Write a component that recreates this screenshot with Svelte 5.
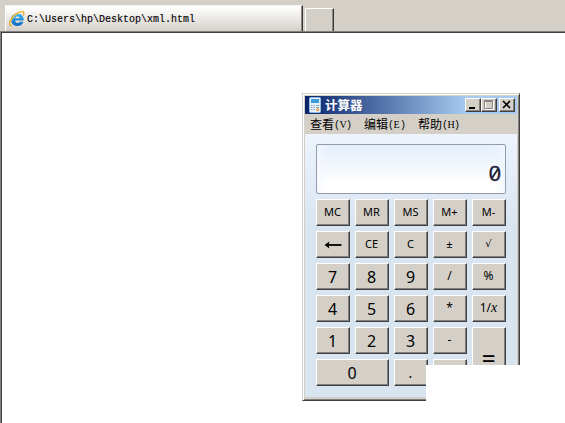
<script>
  const keys = [
    ['MC'], ['MR'], ['MS'], ['M+'], ['M-'],
    ['←', 'back'], ['CE'], ['C'], ['±'], ['√', 'root'],
    ['7', 'digit'], ['8', 'digit'], ['9', 'digit'], ['/', 'op'], ['%', 'op'],
    ['4', 'digit'], ['5', 'digit'], ['6', 'digit'], ['*', 'op'], ['1/x', 'inverse'],
    ['1', 'digit'], ['2', 'digit'], ['3', 'digit'], ['-', 'op minus'], ['=', 'equals'],
    ['0', 'digit zero'], ['.', 'digit dot'], ['+', 'op']
  ];
  const menus = [['查看', 'V'], ['编辑', 'E'], ['帮助', 'H']];
</script>

<main class="browser">
  <header class="tabs">
    <div class="tab">
      <svg class="ie" width="16" height="16" viewBox="0 0 16 16">
        <defs>
          <linearGradient id="blue" x1="0" y1="0" x2="0" y2="1">
            <stop offset="0" stop-color="#45b4ef" /><stop offset="1" stop-color="#0b68bd" />
          </linearGradient>
        </defs>
        <path fill-rule="evenodd" d="M14.800 9.600H6.200c.2 2.600 3.300 3 4.400 1.100h3.900c-1 2.900-3.200 4.300-6.100 4.300-3.800 0-6.400-2.500-6.400-6.200 0-3.800 2.700-6.400 6.500-6.400 4 0 6.400 2.800 6.300 7.200ZM6.200 7.300h4.500C10.500 4.800 6.500 4.800 6.200 7.300Z" fill="url(#blue)" />
        <path d="M2.800 14.900C-.9 14.900.6 9 4.900 4.800 9 .9 13.800-.3 14.700 1.500c.4.900.1 2-.5 3" fill="none" stroke="#e8a722" stroke-width="1.400" />
        <path d="M1.100 12.300C1.400 10.200 3.900 6.600 6.500 4.100 9 1.900 12 .7 13.500.9" fill="none" stroke="#ffe378" stroke-width=".7" />
      </svg>
      <span>C:\Users\hp\Desktop\xml.html</span>
    </div>
    <div class="new-tab"></div>
  </header>
  <section class="page">
    <div class="window">
      <div class="title">
        <svg class="app-icon" width="14" height="16" viewBox="0 0 14 16">
          <rect x="1.500" y=".5" width="11" height="15" rx="1" fill="#e6f1f9" stroke="#8fbbdc" />
          <rect x="3" y="2" width="8" height="4" fill="#3c9bda" />
          <path d="M3 8.500h1.500m1 0H7m1 0h3M3 10.500h1.500m1 0H7m1 0h3M3 12.500h1.500m1 0H7" stroke="#8aa9c1" />
          <path d="M8.500 11.500H11V14H8.500Z" fill="#f09a45" />
        </svg>
        <strong>计算器</strong>
        <div class="controls">
          <i><svg width="14" height="12" viewBox="0 0 14 12"><path d="M3 8h6v2H3Z" fill="#000" /></svg></i>
          <i><svg width="14" height="12" viewBox="0 0 14 12"><path d="M3.500 2.500h8v8h-8ZM3 2.500h9" fill="none" stroke="#fff" /><path d="M2.500 1.500h8v8h-8ZM2 2.500h9" fill="none" stroke="#868580" /></svg></i>
          <i class="close"><svg width="14" height="12" viewBox="0 0 14 12"><path d="m3 2 7 7m0-7-7 7" fill="none" stroke="#000" stroke-width="1.600" /></svg></i>
        </div>
      </div>
      <nav>
        {#each menus as [name, key]}
          <span class="menu">{name}<span class="accel">(<b>{key}</b>)</span></span>
        {/each}
      </nav>
      <div class="body">
        <output>0<svg width="14" height="18" viewBox="0 0 14 18"><path d="M4 14 10 5" stroke="#1e2038" stroke-width="1.800" /></svg></output>
        <div class="keys">
          {#each keys as [label, kind]}
            <div class="key {kind ?? ''}">
              {#if kind === 'inverse'}
                <span>1/<em>x</em></span>
              {:else if kind === 'back'}
                <svg width="18" height="9" viewBox="0 0 18 9"><path d="M4 5h13.500" stroke="#000" stroke-width="1.800" /><path d="M.5 5 5.500 1.500 4.500 5l1 3.500Z" /></svg>
              {:else}
                <span>{label}</span>
              {/if}
            </div>
          {/each}
        </div>
      </div>
      <div class="cover"></div>
    </div>
  </section>
</main>

<style>
  :global(body) { margin: 0; overflow: hidden; }
  .browser { width: 565px; height: 423px; background: #d4d0c8; box-sizing: border-box; overflow: hidden; display: flex; flex-direction: column; }
  .tabs { height: 31px; flex: none; display: flex; align-items: flex-end; padding-left: 5px; box-sizing: border-box; }
  .tab { width: 298px; height: 26px; box-sizing: border-box; display: flex; align-items: center; padding: 1px 0 0 3px; border-top: 1px solid #f4f3ef; border-left: 1px solid #fff; border-right: 1px solid #383838; box-shadow: inset -1px 0 #8c8984; background: linear-gradient(#fff 5%, #d4d0c8); }
  .tab span { font: 10px/13px "Liberation Mono", monospace; margin: 1px 0 0 2px; color: #000; -webkit-text-stroke: .12px #000; white-space: pre; }
  .new-tab { box-sizing: border-box; width: 29px; height: 23px; margin-left: 2px; border-top: 1px solid #fff; border-left: 1px solid #fff; border-right: 1px solid #383838; box-shadow: inset -1px 0 #8c8984; }
  .page { flex: 1; box-sizing: border-box; background: #fff; border-top: 1px solid #808080; border-left: 1px solid #808080; box-shadow: inset 1px 1px #404040; padding: 61px 0 0 301px; }
  .window { position: relative; width: 218px; height: 308px; box-sizing: border-box; border: 1px solid #d4d0c8; border-right-color: #404040; border-bottom-color: #404040; box-shadow: inset 1px 1px #fff, inset -1px -1px #808080; padding: 2px 2px 0; background: #d4d0c8; }
  .title { height: 18px; display: flex; align-items: center; background: linear-gradient(90deg, #0a246a, #a6caf0 76%); padding: 0 2px 0 3px; }
  .title strong { color: #fff; font: bold 12.500px/18px "Noto Sans CJK SC", sans-serif; margin-left: 3px; }
  .controls { display: flex; margin-left: auto; }
  .controls i { width: 16px; height: 14px; box-sizing: border-box; border: 1px solid; border-color: #fff #404040 #404040 #fff; box-shadow: inset -1px -1px #808080; background: #d4d0c8; display: flex; }
  .controls .close { margin-left: 2px; }
  nav { height: 20px; display: flex; padding-left: 5px; box-sizing: border-box; }
  .menu { width: 54px; font: 12px/20px "Noto Sans CJK SC", sans-serif; white-space: nowrap; color: #000; }
  .accel { font: 10px/20px "Liberation Mono", monospace; vertical-align: 1px; }
  .accel b { font: 10px/20px "Liberation Serif", serif; display: inline-block; width: 6px; text-indent: -.5px; }
  .body { height: 263px; box-sizing: border-box; padding: 10px 11px 0; background: linear-gradient(#edf4fd, #d9e4f1 36%); }
  output { display: block; position: relative; height: 50px; box-sizing: border-box; border: 1px solid #8e9cad; border-radius: 2px; background: linear-gradient(#e3edfa, #fff 80%); box-shadow: inset 10px 3px 10px -6px #f5f8ff, inset -10px 3px 10px -6px #f1f6ff; font: 22px/57px "Liberation Sans", sans-serif; text-align: right; color: #1e2038; padding-right: 4px; -webkit-text-stroke: .3px #1e2038; }
  output svg { position: absolute; right: 3px; top: 19px; }
  .keys { margin-top: 5px; display: grid; grid-template-columns: repeat(5, 34px); grid-auto-rows: 27px; gap: 5px; }
  .key { box-sizing: border-box; border: 1px solid; border-color: #fff #404040 #404040 #fff; box-shadow: inset -1px -1px #808080; background: #d4d0c8; display: flex; align-items: center; justify-content: center; font: 11px/20px "Noto Sans", sans-serif; color: #000; padding: 0 1px 1px 0; }
  .digit { font-size: 16px; padding-bottom: 0; }
  .op { font-size: 12px; }
  .root { font: 10px/20px "DejaVu Sans", sans-serif; }
  .zero { grid-column: span 2; }
  .dot { font-size: 14px; }
  .inverse { font-size: 12px; }
  .inverse em { font: italic 14px/1 "Liberation Serif", serif; }
  .equals { grid-row: span 2; font-size: 24px; padding-top: 3px; -webkit-text-stroke: .2px #000; }
  .cover { position: absolute; left: 123px; top: 271px; width: 100px; height: 45px; background: #fff; }
</style>
